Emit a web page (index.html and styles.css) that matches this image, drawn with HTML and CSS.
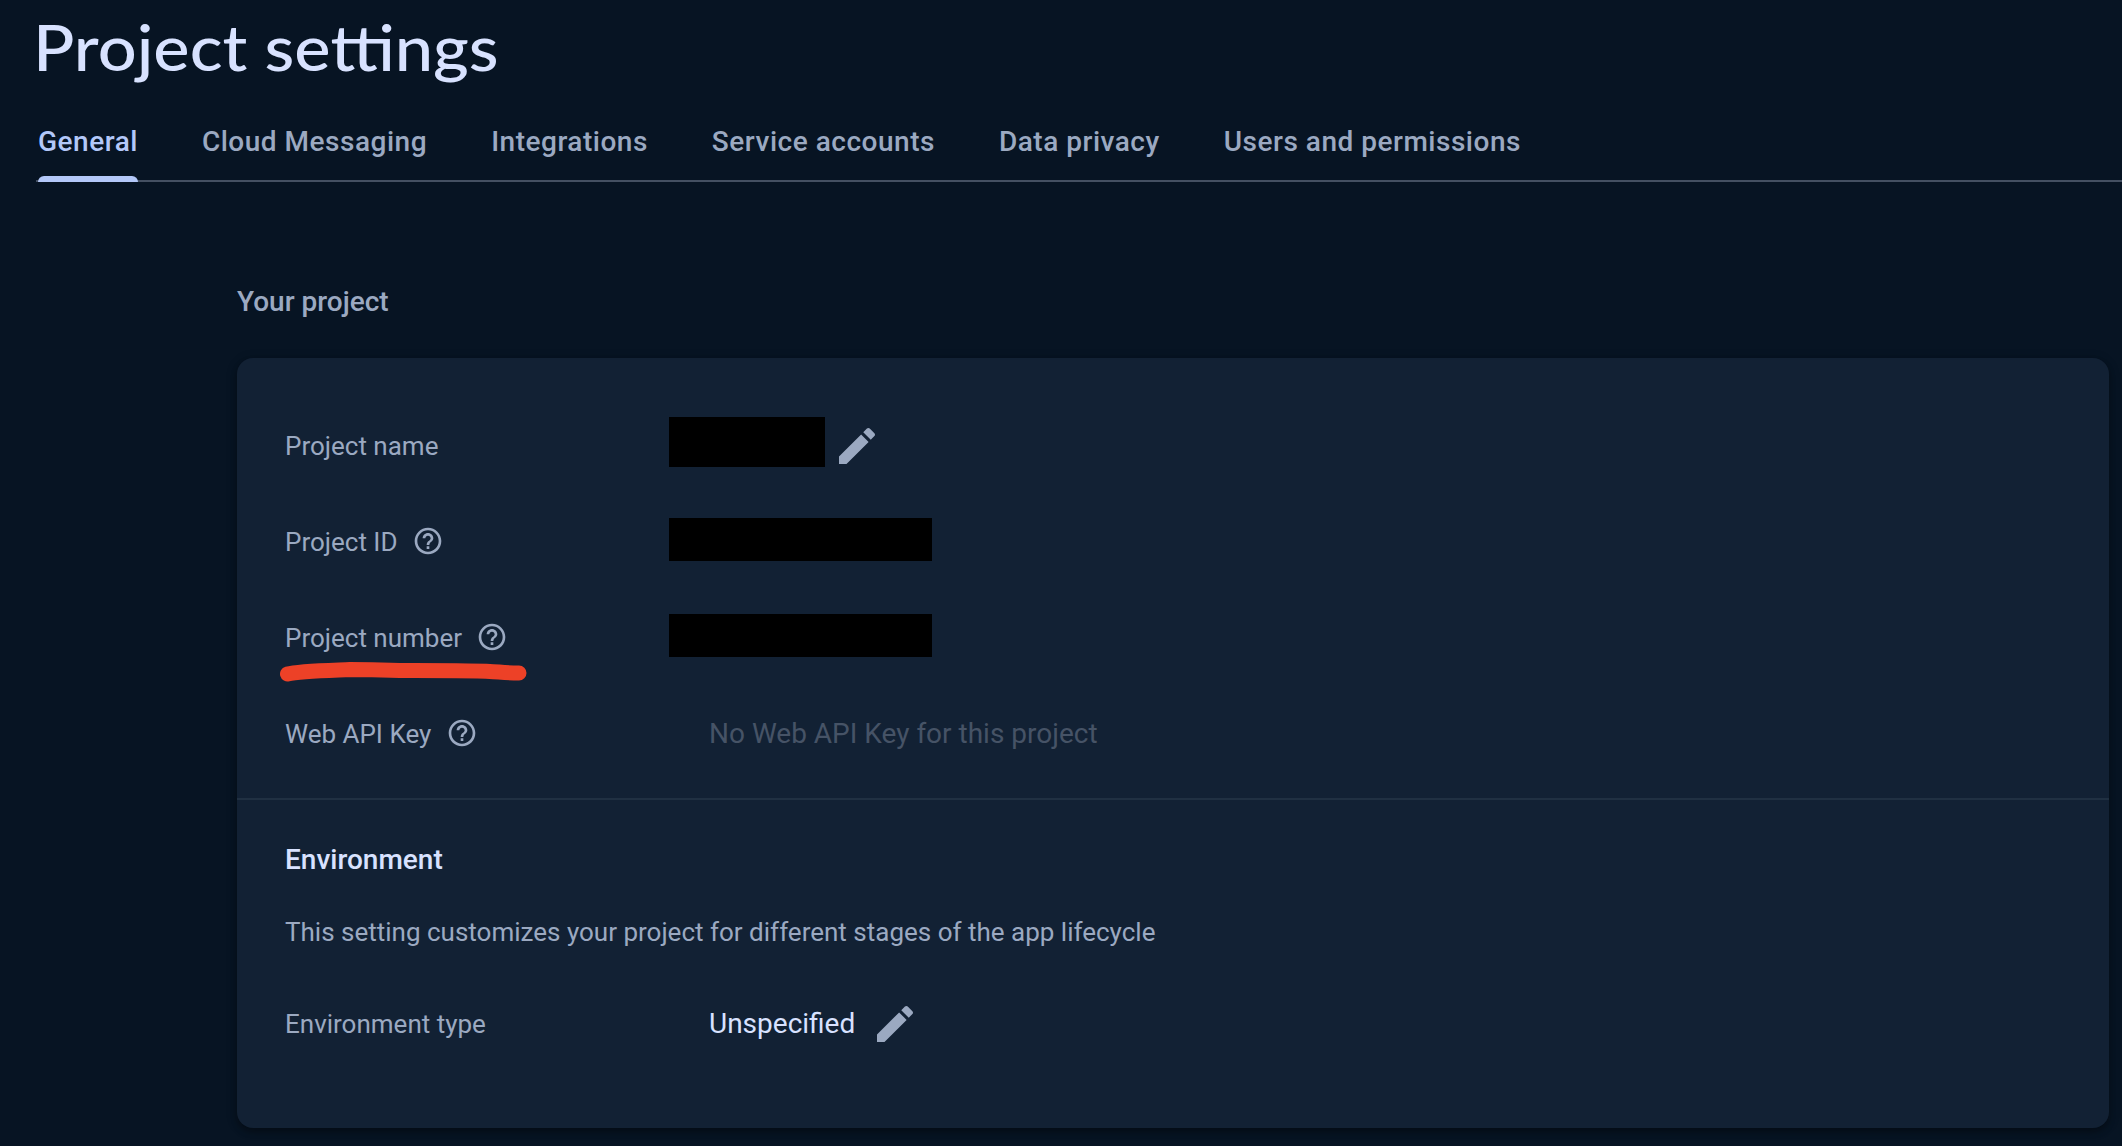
FILE: index.html
```html
<!DOCTYPE html>
<html lang="en">
<head>
<meta charset="utf-8">
<title>Project settings</title>
<link rel="stylesheet" href="styles.css">
</head>
<body>
<svg class="defs" aria-hidden="true">
  <symbol id="edit" viewBox="0 0 24 24"><path d="M3 17.25V21h3.75L17.81 9.94l-3.75-3.75L3 17.25zM20.71 7.04c.39-.39.39-1.02 0-1.41l-2.34-2.34c-.39-.39-1.02-.39-1.41 0l-1.83 1.83 3.75 3.75 1.83-1.83z"/></symbol>
  <symbol id="help" viewBox="0 0 24 24"><path d="M11 18h2v-2h-2v2zm1-16C6.48 2 2 6.48 2 12s4.48 10 10 10 10-4.480 10-10S17.520 2 12 2zm0 18c-4.410 0-8-3.590-8-8s3.590-8 8-8 8 3.590 8 8-3.590 8-8 8zm0-14c-2.210 0-4 1.790-4 4h2c0-1.100.9-2 2-2s2 .9 2 2c0 2-3 1.750-3 5h2c0-2.250 3-2.500 3-5 0-2.210-1.790-4-4-4z"/></symbol>
</svg>
<header class="header">
  <h1 class="title">Project settings</h1>
  <nav class="tabs">
    <a class="tab tab-active">General</a>
    <a class="tab">Cloud Messaging</a>
    <a class="tab">Integrations</a>
    <a class="tab">Service accounts</a>
    <a class="tab">Data privacy</a>
    <a class="tab">Users and permissions</a>
  </nav>
</header>
<main class="content">
  <h2 class="section-title">Your project</h2>
  <section class="card">
    <div class="details">
      <div class="row">
        <div class="label">Project name</div>
        <div class="value value-hidden value-name"><span class="redacted redacted-name"></span><svg class="edit edit-name"><use href="#edit"/></svg></div>
      </div>
      <div class="row">
        <div class="label">Project ID<svg class="help"><use href="#help"/></svg></div>
        <div class="value value-hidden"><span class="redacted"></span></div>
      </div>
      <div class="row row-marked">
        <div class="label">Project number<svg class="help"><use href="#help"/></svg></div>
        <div class="value value-hidden"><span class="redacted"></span></div>
        <svg class="marker" viewBox="0 0 260 30"><path d="M13.500 17C24 14 50 13.500 76 12.500C100 12.500 115 13.500 140 13.500C175 13.500 205 13.500 225 15C235 16 243 16 245 16"/></svg>
      </div>
      <div class="row">
        <div class="label">Web API Key<svg class="help"><use href="#help"/></svg></div>
        <div class="value value-empty">No Web API Key for this project</div>
      </div>
    </div>
    <div class="environment">
      <h3 class="env-title">Environment</h3>
      <p class="env-text">This setting customizes your project for different stages of the app lifecycle</p>
      <div class="row">
        <div class="label">Environment type</div>
        <div class="value">Unspecified<svg class="edit"><use href="#edit"/></svg></div>
      </div>
    </div>
  </section>
</main>
</body>
</html>
```
FILE: styles.css
```css
* { box-sizing: border-box; }
body {
  margin: 0;
  height: 1146px;
  overflow: hidden;
  background: #071423;
  color: #9ba9c1;
  font-family: Roboto, "Liberation Sans", sans-serif;
}
h1, h2, h3, p { margin: 0; }
.defs { display: none; }
.header { padding-left: 36px; height: 182px; }
.title {
  width: max-content;
  height: 102px;
  margin-left: -3px;
  padding-top: 7px;
  font: 500 63px/80px Lato, sans-serif;
  color: #d8e2ff;
  transform: scaleX(1.088);
  transform-origin: left;
}
.tabs {
  display: flex;
  gap: 64px;
  height: 80px;
  padding-left: 2px;
  border-bottom: 2px solid #445062;
}
.tab {
  height: 80px;
  font-size: 28px;
  font-weight: 500;
  line-height: 80px;
  letter-spacing: 0.515px;
  white-space: nowrap;
}
.tab-active {
  position: relative;
  color: #b3c8f9;
}
.tab-active::after {
  content: "";
  position: absolute;
  left: 0;
  right: 0;
  bottom: 0;
  height: 6px;
  border-radius: 6px 6px 0 0;
  background: #b3c8f9;
}
.content { padding: 98px 13px 0 237px; }
.section-title {
  height: 78px;
  font-size: 28px;
  font-weight: 500;
  line-height: 44px;
}
.card {
  height: 770px;
  border-radius: 16px;
  background: #122134;
  box-shadow: 0 4px 6px rgba(0, 0, 0, .25), 0 2px 12px rgba(0, 0, 0, .2);
}
.details {
  height: 442px;
  padding: 40px 48px 16px;
  border-bottom: 2px solid #203042;
}
.row {
  display: grid;
  grid-template-columns: 424px 1fr;
  align-items: center;
  height: 96px;
}
.row-marked { position: relative; }
.label {
  display: flex;
  align-items: center;
  font-size: 26px;
  line-height: 40px;
}
.value {
  display: flex;
  align-items: center;
  font-size: 28px;
  line-height: 40px;
  color: #d8e2ff;
}
.value-hidden { margin: -5px 0 0 -40px; }
.value-name { margin-top: -8px; }
.value-empty { color: #465366; }
.redacted {
  width: 263px;
  height: 43px;
  background: #000;
}
.redacted-name {
  width: 156px;
  height: 50px;
}
.help {
  width: 32px;
  height: 32px;
  margin: -2px 0 0 14.3px;
  fill: #9ba9c1;
}
.edit {
  width: 48px;
  height: 48px;
  margin-left: 16px;
  fill: #9ba9c1;
}
.edit-name { margin: 8px 0 0 8px; }
.marker {
  position: absolute;
  left: -11px;
  top: 67px;
  width: 260px;
  height: 30px;
  fill: none;
  stroke: #ed4127;
  stroke-width: 15px;
  stroke-linecap: round;
  stroke-linejoin: round;
}
.environment { padding: 40px 48px 0; }
.env-title {
  height: 72px;
  font-size: 28px;
  font-weight: 500;
  line-height: 40px;
  color: #d8e2ff;
}
.env-text {
  height: 64px;
  font-size: 26px;
  line-height: 40px;
}
```
